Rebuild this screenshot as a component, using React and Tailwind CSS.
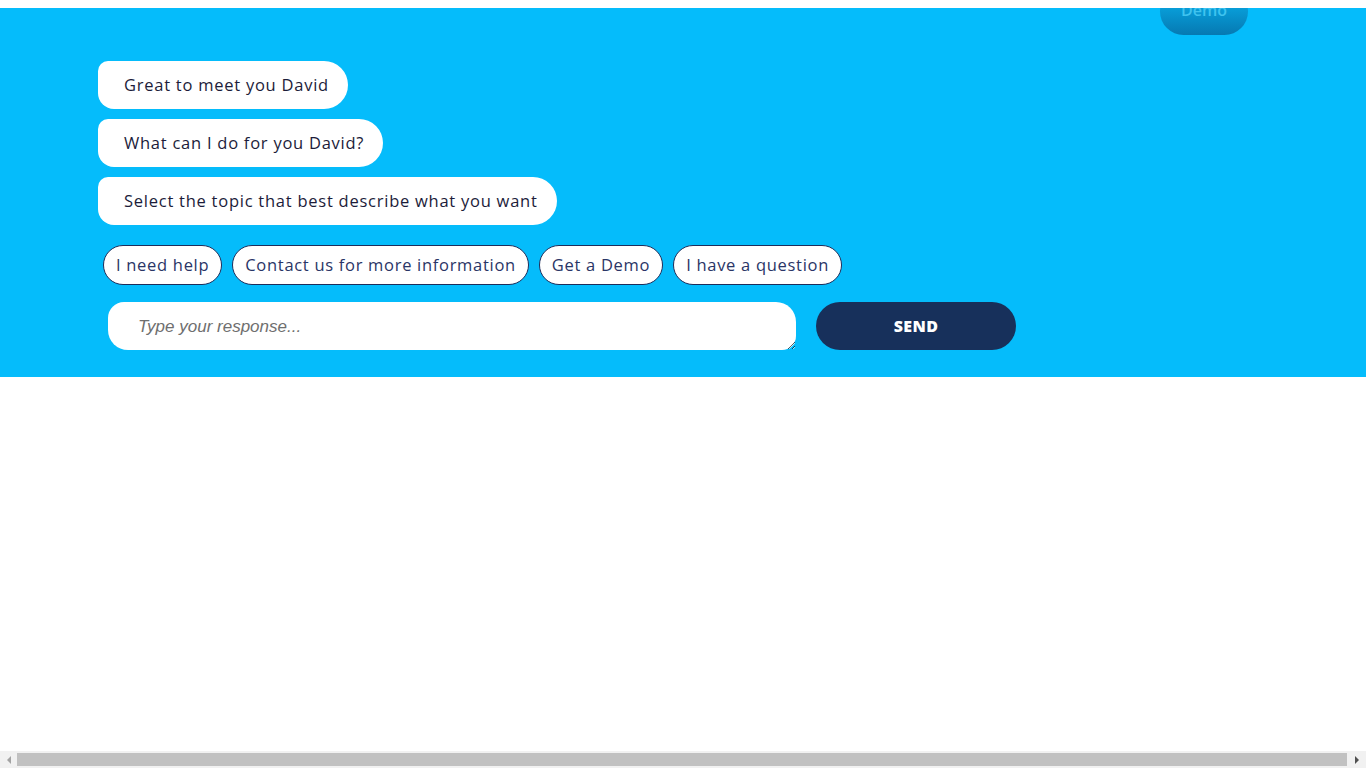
import React from "react";

const replies = ["I need help", "Contact us for more information", "Get a Demo", "I have a question"];

const messages = [
  "Great to meet you David",
  "What can I do for you David?",
  "Select the topic that best describe what you want",
];

export default function App() {
  return (
    <div className="flex h-screen flex-col bg-white pt-2 font-['Open_Sans',sans-serif]">
      <div className="relative h-[369px] overflow-hidden bg-[#05bcfb]">
        {/* demo button, half scrolled off the top */}
        <div className="absolute left-[1160px] top-[-20px] flex h-[47px] w-[88px] items-end justify-center rounded-[24px] bg-gradient-to-b from-[#0bb8f4] to-[#0679b2] pb-[17px] text-[16px] font-semibold leading-none text-[#3fc3ef]">
          Demo
        </div>

        <div className="flex flex-col items-start gap-[10px] pl-[98px] pt-[53px]">
          {messages.map((m) => (
            <div
              key={m}
              className="flex h-[48px] items-center rounded-[10px_24px_24px_16px] bg-white pl-[26px] pr-[19px] text-[16.5px] tracking-[0.75px] text-[#1c1c3a]"
            >
              {m}
            </div>
          ))}
        </div>

        <div className="mt-[20px] flex gap-[10px] pl-[103px]">
          {replies.map((r) => (
            <button
              key={r}
              className="h-[40px] rounded-full border border-[#1e2d5a] bg-white px-[12px] text-[16.5px] tracking-[0.7px] text-[#2a3566]"
            >
              {r}
            </button>
          ))}
        </div>

        <div className="mt-[17px] flex items-center gap-[20px] pl-[108px]">
          <textarea
            rows={1}
            placeholder="Type your response..."
            className="h-[48px] w-[688px] rounded-[16px_20px_14px_20px] bg-white px-[30px] py-[12px] font-['Liberation_Sans',sans-serif] text-[17px] italic text-[#555] outline-none placeholder:text-[#6f6f6f]"
          />
          <button className="h-[48px] w-[200px] rounded-full bg-[#17305b] text-[16px] font-extrabold tracking-wide text-white">
            SEND
          </button>
        </div>
      </div>
      <div className="flex-1" />

      {/* horizontal scrollbar */}
      <div className="flex h-[17px] items-center bg-[#f1f1f1]">
        <div className="flex w-[17px] justify-center">
          <div className="h-0 w-0 border-y-[4px] border-r-[4px] border-y-transparent border-r-[#a3a3a3]" />
        </div>
        <div className="h-[13px] flex-1 bg-[#c1c1c1]" />
        <div className="flex w-[19px] justify-center">
          <div className="h-0 w-0 border-y-[4px] border-l-[4px] border-y-transparent border-l-[#505050]" />
        </div>
      </div>
    </div>
  );
}
